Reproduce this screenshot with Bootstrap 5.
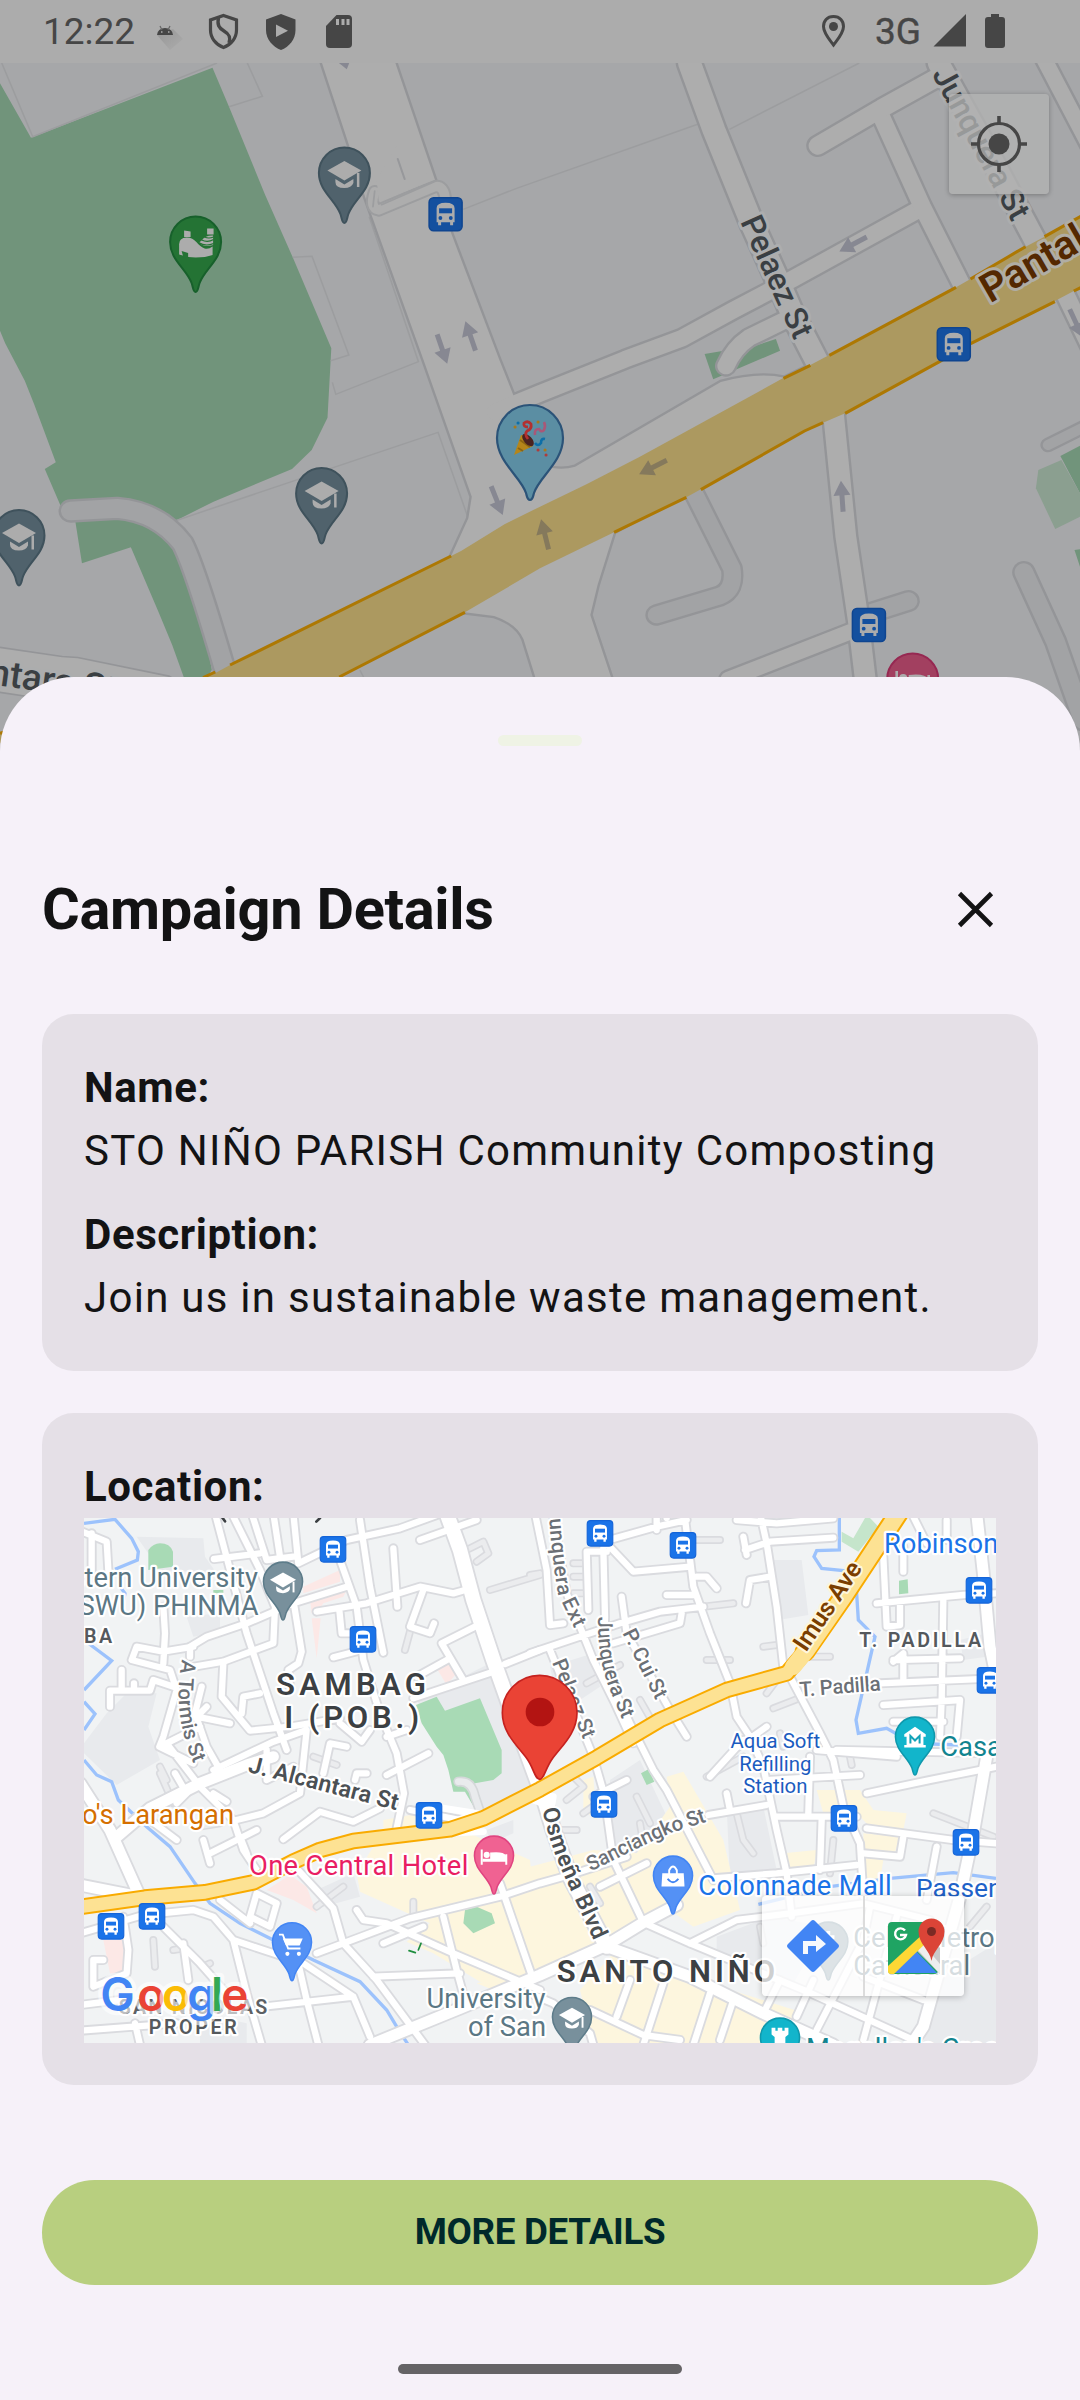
<!DOCTYPE html>
<html lang="en">
<head>
<meta charset="utf-8">
<meta name="viewport" content="width=device-width, initial-scale=1">
<title>Campaign Details</title>
<link href="https://cdn.jsdelivr.net/npm/bootstrap@5.3.0/dist/css/bootstrap.min.css" rel="stylesheet">
<style>
html{font-size:16px}
body{width:1080px;height:2400px;overflow:hidden;background:#f6f1f9;font-family:Roboto,"Liberation Sans",sans-serif;color:#131314}
svg{display:block;flex:none}
.status-strip{height:63px;background:#acacac;color:#464646;padding:0 74px 0 43px;font-size:37px;line-height:1}
.map-back{height:614px;background:#a6a7a9}
.map-back>svg{height:690px;width:1080px}
.locate-btn{top:31px;left:949px;width:100px;height:100px;background:rgba(178,178,178,.78);border-radius:4px;box-shadow:0 1px 5px rgba(0,0,0,.28)}
.detail-sheet{height:1723px;background:#f6f1f9;border-radius:74px 74px 0 0;padding:58px 42px 0}
.grab-bar{width:84px;height:11px;border-radius:6px;background:#eff3e5}
.sheet-head{height:105px;margin-top:111px;margin-bottom:52px}
.sheet-head h1{font-size:57.75px;font-weight:700;line-height:1;letter-spacing:-.3px}
.close-x{width:125px;height:105px}
.info-card{background:#e5e0e7;border:0;border-radius:31.5px;padding:42px;margin-bottom:42px}
.info-card p,.info-card dt,.info-card dd{font-size:42px;line-height:63px;letter-spacing:1.27px;margin:0;white-space:nowrap}
.info-card dt,.tag-line{font-weight:700}
.info-card dt{letter-spacing:.58px}
.info-card .tag-line{letter-spacing:.58px}
.mini-map{height:525px;width:912px}
.map-tools{left:678px;top:378px;width:202px;height:100px;background:rgba(255,255,255,.75);border-radius:4px;box-shadow:0 1px 6px rgba(0,0,0,.25)}
.map-tools>span+span{border-left:2px solid #dcdcdc}
.more-btn,.more-btn:hover{height:105px;border:0;background:#b8cf7f;color:#00292b;font-size:36.75px;font-weight:700;line-height:1;margin-top:95px;letter-spacing:-.32px}
.nav-pill{width:284px;height:10px;border-radius:5px;background:#656366;margin-top:79px}
.halo{paint-order:stroke;stroke-linejoin:round}
</style>
</head>
<body>
<header class="status-strip d-flex align-items-center justify-content-between">
  <div class="d-flex align-items-center">
    <span style="width:107px">12:22</span>
    <svg width="310" height="63" viewBox="150 0 310 63">
      <defs><linearGradient id="sh" x1="0" y1="0" x2="1" y2="1"><stop offset="0" stop-color="#969696"/><stop offset="1" stop-color="#acacac"/></linearGradient></defs>
      <path d="M157 35L173 29L183 39L170 50Z" fill="url(#sh)"/>
      <path d="M157 35a8 7 0 0 1 16 0z" fill="#464646"/><path d="M160 26l2 4M170 26l-2 4" stroke="#666" stroke-width="1.200"/><path d="M161 32h1.500M168 32h1.500" stroke="#acacac" stroke-width="1.500"/>
      <path d="M223.500 15.500L236.500 20V30C236.500 38 231 45 223.500 47.500C216 45 210.500 38 210.500 30V20Z" fill="none" stroke="#464646" stroke-width="3.200"/>
      <path d="M218.500 17.500C217 25 219 28 224 31C229 34 231 37 229 43" fill="none" stroke="#464646" stroke-width="3.400"/>
      <path d="M281 14L295.500 19.500V30C295.500 39.500 289 47 281 50C273 47 266 39.500 266 30V19.500Z" fill="#464646"/><path d="M276 24.500V37L288 30.700Z" fill="#acacac"/>
      <path d="M336.500 15H348a4 4 0 0 1 4 4V44a4 4 0 0 1-4 4H330a4 4 0 0 1-4-4V26Z" fill="#464646"/><path d="M337.500 19v6M343 19v6M348 19v6" stroke="#acacac" stroke-width="3"/>
    </svg>
  </div>
  <div class="d-flex align-items-center">
    <svg width="54" height="63" viewBox="821 0 54 63"><path d="M833.500 16.500C827 16.500 823.500 21 823.500 26.500C823.500 33 829 39 833.500 45C838 39 843.500 33 843.500 26.500C843.500 21 840 16.500 833.500 16.500Z" fill="none" stroke="#464646" stroke-width="3"/><circle cx="833.500" cy="26.500" r="4.500" fill="#464646"/></svg>
    <span style="width:58px;-webkit-text-stroke:.4px #464646">3G</span>
    <svg width="73" height="63" viewBox="933 0 73 63"><path d="M933.500 46.500L966 14V46.500Z" fill="#464646"/><path d="M991 14h8v3h3a3 3 0 0 1 3 3V45a3 3 0 0 1-3 3H988a3 3 0 0 1-3-3V20a3 3 0 0 1 3-3h3z" fill="#464646"/></svg>
  </div>
</header>

<section class="map-back position-relative">
<svg viewBox="0 189 3136 2070" preserveAspectRatio="none">
  <defs>
    <path id="pin" d="M0 50C-2.500 50-2.300 46-4 41C-9 27-25.500 18-25.500 0A25.500 25.500 0 1 1 25.500 0C25.500 18 9 27 4 41C2.300 46 2.500 50 0 50Z" stroke-width="2"/>
    <g id="cap"><path d="M-17-2.500L0-12L17-2.500L0 7.500Z"/><path d="M-9 6L0 11.500L9 6V10Q7 15 0 15Q-9 15-9 9Z"/><path d="M12.500 0h2.500v14h-2.500z"/></g>
    <g id="bus"><rect x="-16.500" y="-16.500" width="33" height="33" rx="4.500" stroke-width="1.500"/><g stroke="none"><path d="M-9-6Q-9-11.500 0-11.500Q9-11.500 9-6V8H7.500V11H4.500V8H-4.500V11H-7.500V8H-9Z" fill="var(--w)"/><path d="M-6.500-6h13v5h-13z"/><circle cx="-5.200" cy="3.700" r="1.900"/><circle cx="5.200" cy="3.700" r="1.900"/></g></g>
    <path id="arr" d="M0-15.500L8.500-1H2.500V15.500H-2.500V-1H-8.500Z"/>
    <g id="tm">
      <path d="M2002 189L2073 390L2185 675L2262 850L2300 940L2380 1100" style="stroke-width:calc(66px + var(--k))"/>
      <path d="M2665 630L2300 838L2130 930L1980 1015L1815 1078L1568 1180L1440 1235" style="stroke-width:calc(50px + var(--k))"/>
      <path d="M2555 340L2678 620L2810 890" style="stroke-width:calc(50px + var(--k))"/>
      <path d="M2375 437L2560 325L2740 222" style="stroke-width:calc(54px + var(--k))"/>
      <path d="M2725 189L2860 440L3015 740" style="stroke-width:calc(62px + var(--k))"/>
      <path d="M3028 170L3170 450" style="stroke-width:calc(46px + var(--k))"/>
      <path d="M3092 880L3190 1090" style="stroke-width:calc(52px + var(--k))"/>
      <path d="M2290 955L2175 1013Q2130 1045 2108 1098" style="stroke-width:calc(50px + var(--k))"/>
      <path d="M2420 1240L2456 1610L2492 1860L2515 2060" style="stroke-width:calc(60px + var(--k))"/>
      <path d="M2470 1895L2115 2038" style="stroke-width:calc(46px + var(--k))"/>
    </g>
    <g id="ts">
      <path d="M2010 1468L2125 1705Q2135 1770 2090 1788L1906 1845" style="stroke-width:calc(50px + var(--k))"/>
      <path d="M2510 1845L2638 1803" style="stroke-width:calc(52px + var(--k))"/>
      <path d="M2973 1717L3065 1925L3145 2160" style="stroke-width:calc(54px + var(--k))"/>
      <path d="M3043 1335L3160 1275" style="stroke-width:calc(30px + var(--k))"/>
      <path d="M205 1533L340 1525Q460 1535 530 1630Q565 1700 650 2000" style="stroke-width:calc(56px + var(--k))"/>
    </g>
    <path id="tp" d="M935 189L1015 440L1060 590L1230 1080L1370 1490L1360 1555L1310 1668L1350 1837L1435 1848Q1500 1870 1520 1917L1560 2050H1780L1714 1845L1735 1755L1783 1597L2300 1300L2353 1095L2278 1133Q2200 1115 2093 1146L1670 1400Q1640 1410 1603 1404L1493 1192L1450 1080L1310 700L1265 545L1148 189Z"/>
    <path id="tj" d="M-10 1943L180 1972L225 1975L490 2031L600 2100L100 2090L-10 2073Z"/>
  </defs>
  <path fill="#a6a7a9" d="M0 189H3136V2260H0Z"/>
  <path fill="#71947b" d="M0 250L90 413L617 203L665 320L770 585L850 772L915 930L962 1045L951 1253L905 1350L848 1407L620 1505L510 1562L560 1700L615 2010L590 2050H540L500 1935L460 1835L380 1642L238 1690L215 1540L175 1515L130 1407L162 1387L100 1215L72 1142L15 1030L0 992ZM2046 1062L2071 1138L2265 1052L2253 1017L2200 1035ZM3079 1368L3136 1337V1480ZM3120 1650L3136 1648V1700Z"/>
  <path fill="#8b9f90" d="M3015 1410L3082 1380L3136 1480V1550L3064 1587L3008 1465Z"/>
  <g fill="none" stroke="#9c9d9f" stroke-width="4.500"><path d="M5 189L95 410L630 189M718 189L762 289L665 320M850 772L906 769L1013 1065L960 1082M1072 650L1215 1085L975 1183L965 1147M510 1562L1272 1297L1358 1550M1345 628L1500 565L2028 372M2118 388L2495 189M1045 2010L1060 2040"/></g>
  <g fill="none" stroke-linecap="round" stroke-linejoin="round">
    <use href="#ts" style="--k:14px" stroke="#949598"/>
    <use href="#ts" style="--k:0px" stroke="#a2a3a5"/>
    <use href="#tp" stroke="#949598" stroke-width="14"/><use href="#tj" stroke="#949598" stroke-width="10"/>
    <use href="#tm" style="--k:14px" stroke="#949598"/>
    <use href="#tp" fill="#adadad"/><use href="#tj" fill="#adadad"/>
    <use href="#tm" style="--k:0px" stroke="#adadad"/>
    <path d="M1088 575Q1072 625 1100 630L1262 560Q1290 555 1293 600" stroke="#9c9d9f" stroke-width="40"/><path d="M1088 575Q1072 625 1100 630L1262 560Q1290 555 1293 600" stroke="#adadad" stroke-width="28"/>
    <path d="M1094 540L1150 440L1260 540L1100 605Z" fill="#adadad"/>
    <path d="M1088 573L1083 620M1108 614L1266 543" stroke="#9c9d9f" stroke-width="5"/>
    <path d="M1155 477L1175 537" stroke="#97989b" stroke-width="6"/>
  </g>
  <path fill="#ac9960" d="M500 2090L668 1995L1310 1668L1340 1652L1465 1573L1568 1520L1703 1453L1858 1370L2273 1135L2353 1095L2408 1065L2776 862L2818 837L2978 740L3033 710L3136 650V865L3118 873L3063 903L2843 1020L2728 1085L2454 1240L2390 1268L2336 1295L2035 1468L1993 1492L1783 1597L1568 1705L1350 1837L985 2031L850 2110ZM0 2195L14 2190V2230H0Z"/>
  <path fill="none" stroke="#ad7803" stroke-width="9" d="M590 2033L625 2016M668 1995L1310 1668M2275 1135L2353 1096M2408 1066L2776 862M2818 837L2978 740M3033 710L3140 648M3118 873L3140 862M3063 905L2820 1030L2728 1085L2454 1240M2390 1268L2336 1293L2035 1469M1993 1492L1783 1597M1350 1837L985 2031M0 2200L14 2196"/>
  <g fill="#878892">
    <path d="M984 189L1014 189L1007 208Z"/>
    <use href="#arr" transform="translate(1366 1008) scale(2.904 3) rotate(-19)"/>
    <use href="#arr" transform="translate(1284 1047) scale(2.904 3) rotate(161)"/>
    <use href="#arr" transform="translate(1443 1502) scale(2.904 3) rotate(158)"/>
    <use href="#arr" transform="translate(2477 733) scale(2.904 3) rotate(-118)"/>
    <use href="#arr" transform="translate(2445 1489) scale(2.904 3) rotate(-4)"/>
    <use href="#arr" transform="translate(3125 970) scale(2.904 3) rotate(155)"/>
    <g fill="#85795c"><use href="#arr" transform="translate(1896 1402) scale(2.904 3) rotate(-117)"/><use href="#arr" transform="translate(1582 1603) scale(2.904 3) rotate(-14)"/></g>
  </g>
  <g transform="scale(2.9037 3)" font-family="Roboto" font-weight="500">
    <g class="halo" fill="#3a3f43" stroke="#acadae" stroke-width="6" font-size="32">
      <text transform="translate(740 221.500) rotate(65.500)" textLength="131">Pelaez St</text>
      <text transform="translate(931.500 74) rotate(61.500)" textLength="169">Junquera St</text>
      <text transform="translate(-12 684) rotate(8)" font-size="37">ntara St</text>
      <text transform="translate(990 303.500) rotate(-30)" font-size="40" font-weight="600" fill="#542800" stroke="#b0ada4">Pantaleon</text>
    </g>
    <g fill="#50626c" stroke="#3f525c">
      <g transform="translate(344.400 173)"><use href="#pin"/><use href="#cap" fill="#acacac" stroke="none"/></g>
      <g transform="translate(321.600 493.500)"><use href="#pin"/><use href="#cap" fill="#acacac" stroke="none"/></g>
      <g transform="translate(19 535.500)"><use href="#pin"/><use href="#cap" fill="#acacac" stroke="none"/></g>
    </g>
    <g transform="translate(195.600 242)"><use href="#pin" fill="#247334" stroke="#17602b"/>
      <path fill="#acacac" d="M-11.500-11.500l6.500 1v5.500h-6.500zM11.500-13.500h6.500v6h-6.500zM-16.500 3Q-17-4-9-4.500C0-4.500 2 4 9 6.500Q13 7.500 17 4.500V13Q10 15.500 0 15.500Q-8 15.500-16.500 12.500Z"/>
      <path d="M-14 9l6.500 2v5h-4.500z" fill="#247334"/><path d="M6 -1.500Q10-7 17.500-6.500V3Q9 6 3.500 0.500Z" fill="#acacac"/><path d="M6-2Q12 1 18-2.500M3 .5Q10 5 18 1.500M9-5Q13-3 18-5" fill="none" stroke="#247334" stroke-width="1.100"/></g>
    <g transform="translate(530 438)"><path d="M0 62C-2.800 62-2.800 59-4 55C-9 39-33 24-33 0A33 33 0 1 1 33 0C33 24 9 39 4 55C2.800 59 2.800 62 0 62Z" fill="#5b8ea3" stroke="#2b5378" stroke-width="2.200"/>
      <path d="M-16 17L-9-3Q0-2 3 8Z" fill="#b5861a"/><path d="M-12 10l5 3M-10 2l10 7" stroke="#8c6512" stroke-width="2"/><ellipse cx="-2" cy="2" rx="4" ry="7.500" transform="rotate(-42 -2 2)" fill="#4a2320"/>
      <path d="M-2 1Q-6-4-3-7Q2-9 1-14Q-2-18-6-15Q-7-11-2-11" fill="none" stroke="#b23030" stroke-width="2.800"/><path d="M5-3Q4-9 9-9Q11-5 14-8Q16-12 14-16" fill="none" stroke="#a85878" stroke-width="2.600"/><path d="M5 5Q8 9 11 5Q11 0 15 1" fill="none" stroke="#0d6fa8" stroke-width="2.600"/>
      <g stroke-linecap="round" stroke-width="3"><path d="M-12-15h.1" stroke="#0d6fa8"/><path d="M-15-11h.1M8-16h.1M15 12h.1" stroke="#a8781c"/><path d="M8 12h.1M16 17h.1" stroke="#ae3c3c"/></g>
    </g>
    <g fill="#14509f" stroke="#0f4590" style="--w:#acacac">
      <use href="#bus" transform="translate(445.600 214.300)"/><use href="#bus" transform="translate(953.800 344.200)"/><use href="#bus" transform="translate(868.900 625)"/>
    </g>
    <g transform="translate(912.700 679)"><use href="#pin" fill="#a24060" stroke="#962852"/><path d="M-16-8V12M16 -4V12" stroke="#acacac" stroke-width="2.600"/><path d="M-15 4H16V8H-15ZM-4-4Q12-6 16 0V4H-4Z" fill="#acacac"/><circle cx="-9.500" cy="-1" r="4" fill="#acacac"/></g>
  </g>
</svg>
<div class="locate-btn position-absolute d-flex align-items-center justify-content-center" role="button" aria-label="My location">
  <svg width="60" height="60" viewBox="-30 -30 60 60"><circle r="20.500" fill="none" stroke="#464646" stroke-width="3.200"/><circle r="10.500" fill="#464646"/><path d="M0-28V-20M0 20V28M-28 0H-20M20 0H28" stroke="#464646" stroke-width="3.600"/></svg>
</div>
</section>

<main class="detail-sheet position-relative">
  <div class="grab-bar mx-auto"></div>
  <div class="sheet-head d-flex align-items-center justify-content-between">
    <h1 class="m-0">Campaign Details</h1>
    <div class="close-x d-flex align-items-center justify-content-center" role="button" aria-label="Close"><svg width="37" height="37" viewBox="0 0 37 37"><path d="M2.500 2.500L34.500 34.500M34.500 2.500L2.500 34.500" stroke="#131314" stroke-width="4.600"/></svg></div>
  </div>

  <div class="card info-card">
    <dl class="m-0">
      <dt>Name:</dt><dd>STO NIÑO PARISH Community Composting</dd>
      <dt style="margin-top:21px">Description:</dt><dd>Join us in sustainable waste management.</dd>
    </dl>
  </div>

  <div class="card info-card">
    <p class="tag-line">Location:</p>
    <div class="mini-map position-relative overflow-hidden">
    <svg width="912" height="525" viewBox="72 174 2736 1575">
      <defs>
        <g id="lb"><path d="M1160 160L1200 270L1240 420L1300 600L1350 740L1440 985M1450 1010L1480 1110L1530 1250L1640 1460" style="stroke-width:calc(42px + var(--k))"/>
        <path d="M165 1135L270 1045L420 970L560 915L640 890M60 970L150 1110L235 1300M60 1275L210 1305M930 1755L1200 1645L1440 1545L1640 1455L1750 1388L1850 1335M1640 1460L1890 1550L2110 1660L2320 1755M2750 160L2770 340L2790 560L2815 680M2780 890L2740 1120L2700 1310L2590 1700L2550 1760" style="stroke-width:calc(32px + var(--k))"/></g>
        <g id="ln" style="stroke-width:calc(18px + var(--k))">
          <path d="M465 160L510 330L560 520L640 760L680 870M515 160L600 330L645 440L640 550L490 605L390 622M575 160L620 300L700 290M462 297L600 280M640 160L660 290L700 420L725 575L715 610L685 630L690 690M700 160L715 310L860 240L1020 205L1130 165M60 212L140 245L145 330M95 220V330M390 590V560L440 530L560 490L700 430L860 380M840 300L890 440L910 600L960 760L1010 880L1032 1000L1010 1105M900 180L930 380L970 578M770 455L920 430L1080 380L1180 400L1215 390M1080 240L1250 180M1000 265L1012 440M1090 390L1050 500L1110 520L1122 490M820 592L905 570M838 450L845 520H870M1245 500L1145 550L1210 660M1335 612L1440 570M1060 715L1300 635M1070 650L1170 595"/>
          <path d="M400 560L310 575L230 560L215 600L330 630L350 690L310 830L298 860L400 910M310 440L315 520L310 610M150 740V692H270L280 660L345 682M185 690V630M222 690V670M490 610L485 710L570 812L690 800L840 775M545 760L550 710L600 700M425 680L405 760L440 860L480 930M440 740L410 770L510 790M300 860L420 800M460 930L640 845L740 810L720 1000L610 1060L530 1080M790 940L810 850L860 860M840 790L905 845L930 810M980 830L1040 810M980 945L1105 880M320 850L420 980L520 1080L550 1170L590 1230M345 940L380 1000L350 1030M460 1000L500 1025M620 870V960L700 920"/>
          <path d="M700 1215L820 1345L850 1450L950 1560L1095 1755M60 1420L250 1365L400 1350L460 1370L520 1440L640 1480L730 1510L880 1610L930 1730M770 1480L1050 1375L1320 1310L1440 1270L1530 1245L1700 1190M1945 1065L2120 1035M310 1400L420 1510L500 1600M370 1450L385 1560M520 1440L560 1600L605 1755M715 1510L740 1620L775 1755M60 1635L180 1620M60 1712L350 1690M610 1640L880 1610M1320 1270L1420 1560M1150 1370L1190 1530L1220 1640M890 1350L910 1380L980 1390L1180 1480L1440 1590M940 1550L1200 1540M590 1300L570 1370L630 1400L650 1330L590 1300M480 1320L570 1390M430 1140L450 1210M450 1180L590 1110M270 1080L350 1140M670 1138L780 1055L880 1085L960 1045M885 960L890 940H920M1050 1050L1250 1090M190 1370L205 1470L200 1540L100 1580V1500H130M970 1450L1090 1400M225 1690L240 1755M560 1180L540 1130"/>
          <path d="M1425 160L1460 330L1470 495L1510 490M1480 170L1520 400L1600 600L1660 720L1720 850M1470 570L1600 890L1632 1000L1660 1200L1750 1388M1410 580L1680 490L1800 455L1930 440M1685 410L1700 520L1830 750L1880 830M1580 275L1585 450M1585 275H1640M1630 265L1635 470L1630 620L1710 790L1780 930L1820 990L1960 1260M1630 245L1790 200L1880 180M1640 250L1720 335L1890 320M1790 174V210M1873 160L1900 380L1950 520L2010 670L2030 770L2070 830L2110 920L2150 1110L2180 1240L2195 1370M2100 160L2120 250L2150 440L2170 620M2030 180L2150 190L2320 175M2055 270L2130 245L2320 233M2050 230L2060 285M2058 430L2070 360L2130 350M1820 405H1900M1910 350H1940L1970 385M1660 550L1860 490L1865 460M2190 650L2280 820L2320 900L2350 1040L2400 1150L2410 1310M2020 870L2120 800M1950 950L2050 840M2270 870L2510 890M2130 960L2400 945M2330 870L2800 880M2420 1000L2610 960L2810 920M2450 430L2710 405L2810 400M2470 290L2480 500L2520 495V430M2530 260V335M2460 670L2810 655M2500 600L2700 595M2500 605L2530 580V660M2650 420L2645 720L2640 830M2470 735L2700 720L2690 830M2500 785H2650M2560 170L2600 250M2660 180V240"/>
          <path d="M2145 1070H2390M2250 890L2245 1060M2285 1080L2280 1230M2420 1105L2680 1140L2810 1150M2410 1180L2520 1190L2530 1130M2630 1160L2600 1320M2000 1000L2010 1050M1960 1255L2150 1240L2390 1215M1890 1450L2030 1380L2190 1360L2410 1330L2610 1380M1750 1388L1890 1450L2230 1590L2560 1740M1670 1670L1710 1560M1750 1755L1810 1570M1900 1755L1950 1600M1410 1600L1480 1630L1590 1720L1600 1755M1590 1650L1750 1725L1860 1740M1980 1740L2020 1620M2110 1660L2160 1560M2210 1670L2260 1560M2270 1710L2410 1440L2430 1340M2410 1740L2510 1370M2410 1550L2590 1620M1600 1010L1700 960M1620 1280L1760 1210M1820 160V174"/>
        </g>
        <path id="lm" style="stroke-width:calc(10px + var(--k))" d="M1220 270L1270 245L1285 280L1250 305M1290 390L1440 345M1070 440L1035 570M300 940L340 1030M420 1100L480 1090M280 1440L285 1520M340 1470L370 1465M430 1520L450 1510M300 920L320 960M770 1340L850 1280M1060 1325V1360M1540 950L1570 980L1520 1020M1570 1060L1640 1010M1480 1110H1550M1730 1010L1770 1090M1740 1090L1750 1150M2030 1060L2050 1140L2080 1180M1900 240H1980M1930 440L2020 430M1540 310H1570M1540 350H1580M1540 400H1570M1580 670L1680 615M1940 600L2010 600M2110 560L2150 555M2240 590L2310 590M2120 700L2150 660M2140 745L2230 710M1740 720L1780 790M2160 820L2170 860M2620 1060L2800 1130M2310 1240L2320 1140M2100 1400L2110 1450M1940 950L2050 890M2370 890L2375 915M1410 345L1440 340M2730 1400L2780 1340M760 890L830 915M1590 1280L1620 1330"/>
        <path id="ly" d="M50 1342L255 1313L435 1297L580 1267L700 1205L780 1170L880 1143L1170 1108L1270 1075L1440 988L1610 893L1800 780L2000 690L2180 640L2240 570L2350 410L2515 160"/>
      </defs>
      <path fill="#f1f3f4" d="M72 174H2808V1749H72Z"/>
      <path fill="#e8eaed" d="M230 230L430 235L435 290L470 340L300 330ZM380 470L480 460V515L400 530ZM72 850L140 760L200 700H290L265 800L300 900L170 975L72 880ZM1070 720L1290 610L1400 720L1440 860L1420 980L1270 1080L1190 960ZM770 1290L880 1240L900 1310L790 1340ZM1650 960L1740 900L1830 1090L1800 1160L1650 1200ZM2140 300H2225L2245 465L2155 480ZM1470 620L1600 580L1620 680L1500 760ZM2000 1040L2110 1040L2150 1230L2010 1260ZM1970 1430L2130 1370L2300 1400L2200 1570L1970 1480ZM2700 540L2780 520V590L2710 600ZM2630 1560L2808 1450V1749H2590ZM420 1660L560 1690V1749H420ZM1280 1110L1360 1080V1120L1290 1150Z"/>
      <path fill="#fdf6de" d="M970 1080L1080 1060V1100L970 1110ZM940 1160L1240 1125L1410 1200L1440 1500L1410 1590L1260 1565L1120 1480L1040 1445L1110 1390L1000 1340L900 1295L890 1240ZM1410 1220L1600 1170L1730 1180L1830 1040L1820 950L1870 935L1990 1140L2040 1350L1900 1400L1830 1350L1700 1440L1410 1560ZM1660 1480L2220 1655L2200 1749H1600L1560 1590ZM2270 990L2400 990L2440 1050L2540 1060L2530 1110L2430 1100L2390 1060L2290 1060ZM2410 1120L2520 1130L2500 1190H2410ZM2170 1180L2270 1170L2260 1230L2175 1240ZM2410 1190L2470 1200L2460 1260H2410ZM1570 960L1600 950L1610 1080L1570 1050ZM1250 1570L1330 1550L1380 1590L1300 1590Z"/>
      <path fill="#fce8e6" d="M730 380L840 330V365L730 400ZM750 420L860 390L850 410L790 430L770 460H755ZM755 475L782 475L770 595ZM1130 625L1170 600L1190 640L1160 675ZM620 1290L690 1245L740 1280L770 1360L700 1320ZM130 1440H195V1550L150 1540Z"/>
      <path fill="#a8dab5" d="M1068 735L1130 710L1155 752L1260 715L1325 870V940L1300 960L1245 970L1225 985L1250 1055L1215 995L1180 995L1165 930L1150 885L1130 860L1085 790ZM265 330V270Q280 250 300 250Q330 250 339 275V320ZM1250 1340L1295 1360L1305 1390L1240 1420L1210 1390L1215 1350ZM2517 362L2543 358L2545 400L2517 403ZM1743 940L1765 928L1783 965L1760 975ZM460 390h30v10h-30z"/>
      <path fill="#c5e5cb" d="M2345 215L2380 235L2415 174H2430L2455 200L2395 275L2345 245Z"/>
      <path fill="none" stroke="#9cc2fc" stroke-width="10" d="M72 190L165 178L215 235L235 275L232 300L165 328M180 380L195 400L188 435M72 540L155 602L72 690M72 725L105 762L72 810M72 900L110 945L155 965L175 1020L260 1100L330 1160L405 1270L450 1330L540 1390L640 1440L760 1500L900 1565L980 1650L1010 1700L1045 1755M2338 174V270L2270 272L2262 290L2285 325L2350 332L2388 370L2395 480L2445 530L2420 640L2388 780L2395 820L2480 805L2560 850L2700 855M2095 1333L2310 1280L2490 1255L2680 1238L2808 1255"/>
      <g fill="none" stroke-linecap="round" stroke-linejoin="round">
        <use href="#lm" style="--k:14px" stroke="#dadbdf"/><use href="#lm" style="--k:4px" stroke="#ebecee"/>
        <path d="M1195 965Q1235 960 1245 1010L1262 1060" stroke="#d5d8da" stroke-width="30"/><path d="M1195 965Q1235 960 1245 1010L1262 1060" stroke="#e9ebed" stroke-width="20"/>
        <g stroke="#dadbdf" style="--k:12px"><use href="#ln"/><use href="#lb"/></g><g stroke="#fff" style="--k:1px"><use href="#ln"/><use href="#lb"/></g>
        <path d="M1120 1040L1250 1060L1180 1085M1400 1000L1480 1010L1475 1040L1420 1020M1150 1120L1270 1115" stroke="#fff" stroke-width="20"/>
        <use href="#ly" stroke="#f9ab00" stroke-width="50"/><use href="#ly" stroke="#fde293" stroke-width="38"/>
        <path d="M2235 575L2350 410L2515 160" stroke="#f9ab00" stroke-width="62"/><path d="M2200 620L2240 570L2350 410L2515 160" stroke="#fde293" stroke-width="50"/>
        <path d="M1047 1472L1066 1478M1075 1470L1083 1450" stroke="#1e8e3e" stroke-width="5"/><path d="M485 170L495 184M780 174L769 185" stroke="#3c4043" stroke-width="8"/>
      </g>
      <defs>
        <path id="r1" d="M366 598Q348 690 362 780Q376 860 408 925"/><path id="r2" d="M1447 1048Q1470 1160 1525 1275L1610 1460"/>
        <path id="r3" d="M1592 1235Q1760 1150 1830 1120L1970 1075"/><path id="r4" d="M1465 140Q1475 300 1495 405L1560 540"/>
        <path id="r5" d="M1614 470Q1612 600 1650 690L1700 810"/>
      </defs>
      <g class="halo" font-family="Roboto" stroke="#fff" stroke-width="13" font-size="82">
        <g fill="#6b7076" font-size="62" font-weight="500">
          <text><textPath href="#r1" textLength="320">A Tormis St</textPath></text><text><textPath href="#r3" textLength="380">Sanciangko St</textPath></text>
          <text><textPath href="#r4" textLength="378">Junquera Ext</textPath></text><text><textPath href="#r5" textLength="320">Junquera St</textPath></text>
          <text transform="translate(1687 519) rotate(63.500)" textLength="226">P. Cui St</text><text transform="translate(1476 607) rotate(68)" textLength="250">Pelaez St</text>
          <text transform="translate(2220 710) rotate(-4.500)" textLength="244">T. Padilla</text>
        </g>
        <g fill="#4b5054" font-weight="600"><text transform="translate(562 935) rotate(14.500)" font-size="70" textLength="462">J. Alcantara St</text><text font-size="69"><textPath href="#r2" textLength="425">Osmeña Blvd</textPath></text></g>
        <text transform="translate(2238 578) rotate(-56)" font-size="75" font-weight="600" fill="#7a3e00" stroke="#fff6dc" textLength="305">Imus Ave</text>
        <g fill="#3c4043" font-size="93" font-weight="600"><text x="648" y="706" textLength="450">SAMBAG</text><text x="673" y="803" textLength="404">I (POB.)</text><text x="1490" y="1565" textLength="655">SANTO NIÑO</text></g>
        <g fill="#55595d" font-size="59" font-weight="600"><text x="72" y="549" textLength="84">BA</text><text x="2398" y="562" textLength="365">T. PADILLA</text><text x="176" y="1663" textLength="446" opacity=".95">SAN NICOLAS</text><text x="266" y="1723" textLength="264">PROPER</text></g>
        <g fill="#5b7784"><text x="594" y="380" text-anchor="end">Southwestern University</text><text x="596" y="466" text-anchor="end">(SWU) PHINMA</text><text x="1456" y="1643" text-anchor="end">University</text><text x="1458" y="1727" text-anchor="end">of San</text><text x="2380" y="1460">Cebu Metropolitan</text><text x="2380" y="1545">Cathedral</text></g>
        <text x="522" y="1092" text-anchor="end" fill="#d56f00">Mayo's Larangan</text>
        <text x="567" y="1245" textLength="658" fill="#e91e63">One Central Hotel</text>
        <g fill="#1a73e8"><text x="2472" y="278">Robinsons</text><text x="1915" y="1305" textLength="580">Colonnade Mall</text></g><text x="2568" y="1310" fill="#1f62c8" font-size="79">Passenger</text>
        <g fill="#1b5cc0" font-size="61" text-anchor="middle"><text x="2146" y="865">Aqua Soft</text><text x="2146" y="932">Refilling</text><text x="2146" y="998">Station</text></g>
        <g fill="#12848f"><text x="2641" y="888">Casa</text><text x="2238" y="1793" textLength="620">Magellan's Cross</text></g>
      </g>
      <g fill="#1a73e8" stroke="#1464d8" style="--w:#fff">
        <use href="#bus" transform="translate(819 268) scale(2.320)"/><use href="#bus" transform="translate(909 538) scale(2.320)"/><use href="#bus" transform="translate(1620 220) scale(2.320)"/><use href="#bus" transform="translate(1869 256) scale(2.320)"/><use href="#bus" transform="translate(2757 391) scale(2.320)"/><use href="#bus" transform="translate(2790 661) scale(2.320)"/><use href="#bus" transform="translate(1107 1066) scale(2.320)"/><use href="#bus" transform="translate(153 1399) scale(2.320)"/><use href="#bus" transform="translate(276 1369) scale(2.320)"/><use href="#bus" transform="translate(1632 1033) scale(2.320)"/><use href="#bus" transform="translate(2352 1075) scale(2.320)"/><use href="#bus" transform="translate(2718 1147) scale(2.320)"/>
      </g>
      <g fill="#78909c" stroke="#5d7c8a">
        <g transform="translate(669 365) scale(2.300)"><use href="#pin"/><use href="#cap" fill="#fff" stroke="none"/></g>
        <g transform="translate(1536 1671) scale(2.300)"><use href="#pin"/><use href="#cap" fill="#fff" stroke="none"/></g>
        <g transform="translate(2305 1445) scale(2.300)"><use href="#pin"/><path d="M0-14V14M-8-6H8" stroke="#fff" stroke-width="5"/></g>
      </g>
      <g transform="translate(1302 1187) scale(2.300)"><use href="#pin" fill="#f06292" stroke="#e04480"/><path d="M-16-8V12M16-2V12" stroke="#fff" stroke-width="2.600"/><path d="M-15 4H16V8H-15ZM-5-4Q12-6 16 0V4H-5Z" fill="#fff"/><circle cx="-9.500" cy="-1" r="4" fill="#fff"/></g>
      <g transform="translate(696 1447) scale(2.300)"><use href="#pin" fill="#5491f5" stroke="#4285f4"/><path d="M-17-10H-12L-5 8H11" fill="none" stroke="#fff" stroke-width="2.400"/><path d="M-12-5H14L10 4H-8Z" fill="#fff"/><circle cx="-6" cy="15" r="2.700" fill="#fff"/><circle cx="9" cy="15" r="2.700" fill="#fff"/></g>
      <g transform="translate(1839 1247) scale(2.300)"><use href="#pin" fill="#5491f5" stroke="#4285f4"/><path d="M-14-3H14L15 14H-15Z" fill="#fff"/><path d="M-5-2V-7Q0-17 5-7V-2" fill="none" stroke="#fff" stroke-width="2.500"/><path d="M-7 4Q0 13 7 4" fill="none" stroke="#4285f4" stroke-width="2.500"/></g>
      <g transform="translate(2565 830) scale(2.300)"><use href="#pin" fill="#12b5cb" stroke="#0f98ac"/><path d="M-14-3L0-13L14-3V0H11V11H14V14H-14V11H-11V0H-14Z" fill="#fff"/><path d="M-6 9V-1L0 5L6-1V9" fill="none" stroke="#12a3b8" stroke-width="2.600"/></g>
      <g transform="translate(2160 1733) scale(2.300)"><use href="#pin" fill="#12b5cb" stroke="#0f98ac"/><path d="M-11-13H-6V-9H-3V-13H3V-9H6V-13H11V-4L7-1V14H-7V-1L-11-4Z" fill="#fff"/></g>
      <path d="M1440 958C1424 958 1422 925 1400 895C1375 860 1327 820 1327 758A112 112 0 0 1 1551 758C1551 820 1503 860 1478 895C1456 925 1452 958 1440 958Z" fill="#ea4335" stroke="#c5221f" stroke-width="5"/><circle cx="1440" cy="756" r="43" fill="#b31412"/>
      <g font-family="Inter" font-size="138" font-weight="600" class="halo" stroke="#fff" stroke-opacity=".6" stroke-width="26"><text y="1653" x="121 232 306 382 453 484" fill="#4285f4">G<tspan fill="#ea4335">o</tspan><tspan fill="#fbbc05">o</tspan><tspan>g</tspan><tspan fill="#34a853">l</tspan><tspan fill="#ea4335">e</tspan></text></g>
    </svg>
    <div class="map-tools position-absolute d-flex">
      <span class="w-50 d-flex align-items-center justify-content-center"><svg width="54" height="54" viewBox="-27 -27 54 54"><path d="M-2-25Q0-27 2-25L25-2Q27 0 25 2L2 25Q0 27-2 25L-25 2Q-27 0-25-2Z" fill="#4285f4"/><path d="M-10 8V-5H3V-11L13-2L3 6V0H-5V8Z" fill="#f6f8fc"/></svg></span>
      <span class="w-50 d-flex align-items-center justify-content-center"><svg width="60" height="60" viewBox="-3 0 60 60"><path d="M4 6H46Q50 6 50 10V54Q50 58 46 58H4Q0 58 0 54V10Q0 6 4 6Z" fill="#1fa463"/><path d="M3 57L27 34L49 57Z" fill="#4285f4"/><path d="M27 33L40 20L52 32V58Z" fill="#c9c9c9"/><path d="M30 34L35 28L52 48V58Z" fill="#eee"/><path d="M0 50L36 17L42 23L6 58H3Q0 58 0 55Z" fill="#fdd835"/><path d="M17 14.500A5.500 5.500 0 1 0 18 19H12" fill="none" stroke="#fff" stroke-width="2.400"/><path d="M43.500 45C42 34 30.500 28 30.500 15.500A13 13 0 0 1 56.500 15.500C56.500 28 45 34 43.500 45Z" fill="#db4437"/><circle cx="43.500" cy="15.500" r="4.500" fill="#7b2a24"/></svg></span>
    </div>
    </div>
  </div>

  <button type="button" class="btn more-btn rounded-pill w-100 d-flex align-items-center justify-content-center">MORE DETAILS</button>
  <div class="nav-pill mx-auto"></div>
</main>
<script src="https://cdn.jsdelivr.net/npm/bootstrap@5.3.0/dist/js/bootstrap.bundle.min.js"></script>
</body>
</html>
